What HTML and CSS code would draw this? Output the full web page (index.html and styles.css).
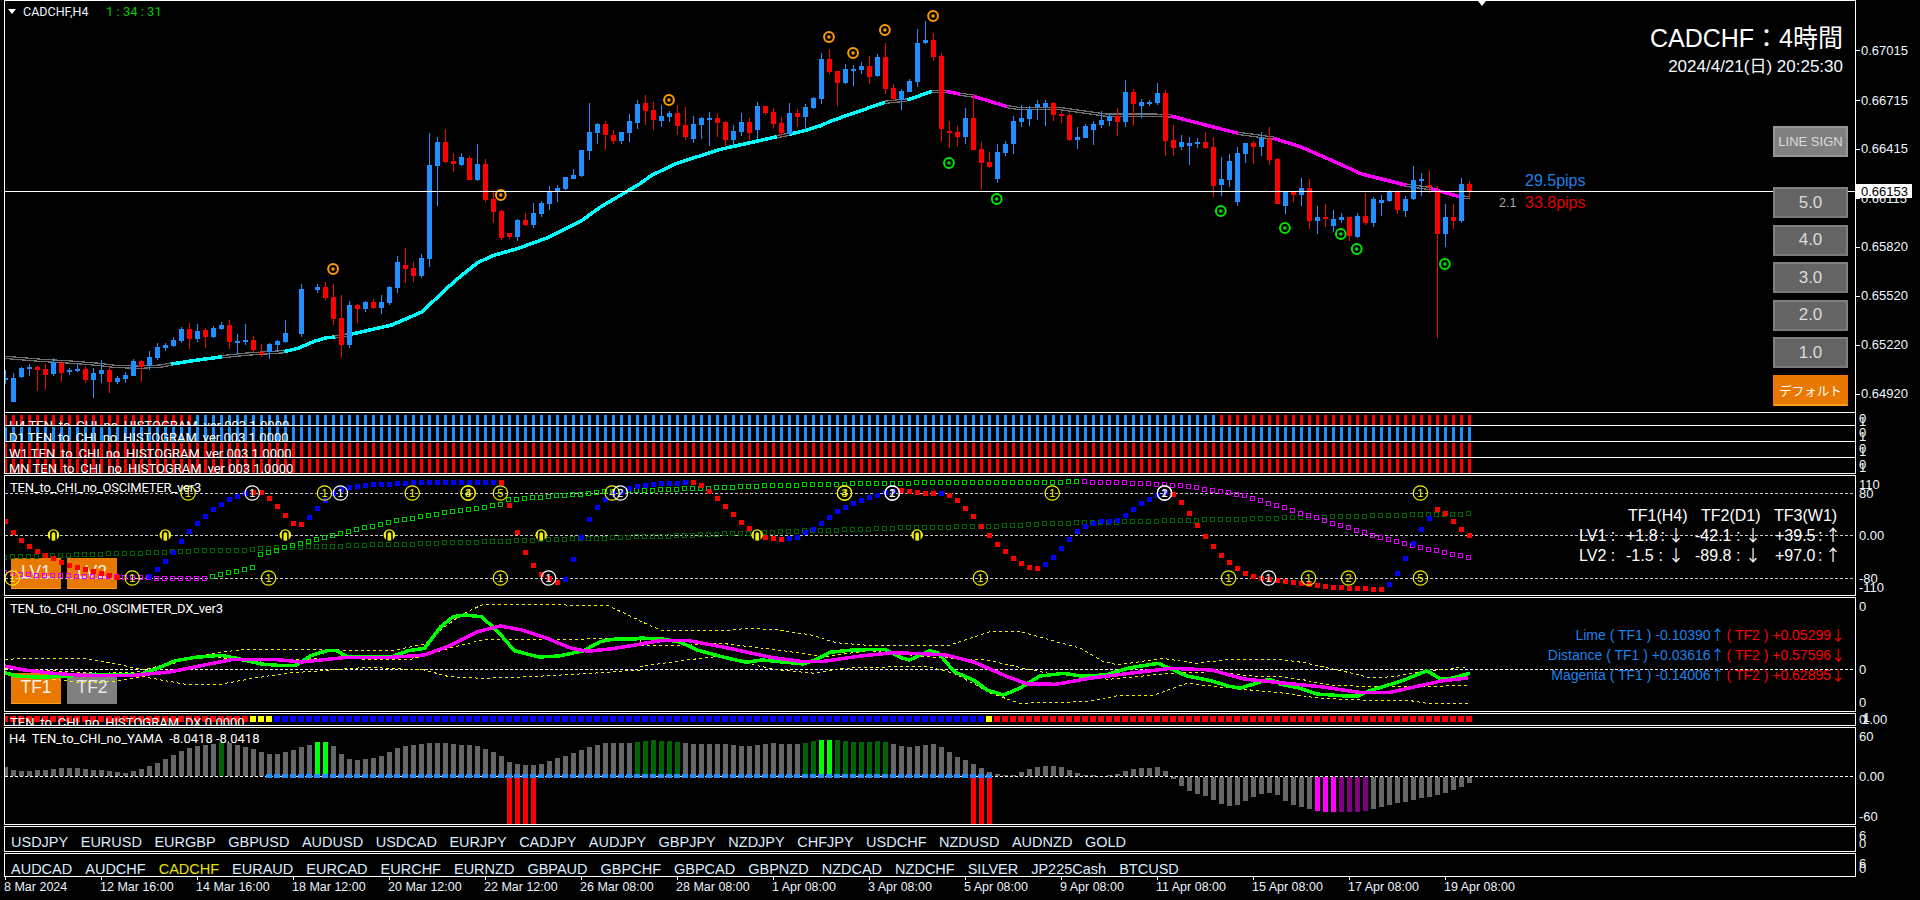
FILE: index.html
```html
<!DOCTYPE html>
<html lang="ja">
<head>
<meta charset="utf-8">
<title>CADCHF,H4</title>
<link rel="stylesheet" href="styles.css">
</head>
<body>
<main class="terminal">
  <section class="pane pane-main">
    <div class="plot">
      <svg class="chart" id="main"></svg>
      <div class="symbol-tag"><i class="tri"></i><span class="symbol-name">CADCHF,H4</span><span class="timer">1 : 34 : 31</span></div>
      <i class="top-mark"></i>
      <div class="headline">
        <div class="headline-title">CADCHF：4時間</div>
        <div class="headline-date">2024/4/21(日) 20:25:30</div>
      </div>
      <div class="pips">
        <span></span><span class="pip-up">29.5pips</span>
        <span class="pip-ratio">2.1</span><span class="pip-down">33.8pips</span>
      </div>
      <div class="side-buttons">
        <button class="btn btn-sign">LINE SIGN</button>
        <button class="btn">5.0</button>
        <button class="btn">4.0</button>
        <button class="btn">3.0</button>
        <button class="btn">2.0</button>
        <button class="btn">1.0</button>
        <button class="btn btn-default">デフォルト</button>
      </div>
    </div>
    <div class="axis"><svg class="chart" id="main-axis"></svg></div>
  </section>

  <section class="pane pane-strip pane-h4">
    <div class="plot"><svg class="chart" id="h4"></svg><div class="strip-label">H4 TEN_to_CHI_no_HISTOGRAM_ver 003 1.0000</div></div>
    <div class="axis"><svg class="chart" id="h4-axis"></svg></div>
  </section>
  <section class="pane pane-strip pane-d1">
    <div class="plot"><svg class="chart" id="d1"></svg><div class="strip-label">D1 TEN_to_CHI_no_HISTOGRAM_ver 003 1.0000</div></div>
    <div class="axis"><svg class="chart" id="d1-axis"></svg></div>
  </section>
  <section class="pane pane-strip pane-w1">
    <div class="plot"><svg class="chart" id="w1"></svg><div class="strip-label">W1 TEN_to_CHI_no_HISTOGRAM_ver 003 1.0000</div></div>
    <div class="axis"><svg class="chart" id="w1-axis"></svg></div>
  </section>
  <section class="pane pane-strip pane-mn">
    <div class="plot"><svg class="chart" id="mn"></svg><div class="strip-label">MN TEN_to_CHI_no_HISTOGRAM_ver 003 1.0000</div></div>
    <div class="axis"><svg class="chart" id="mn-axis"></svg></div>
  </section>

  <section class="pane pane-osc">
    <div class="plot">
      <div class="tf-buttons tf-lv"><button class="tf tf-on">LV1</button><button class="tf tf-on">LV2</button></div>
      <svg class="chart" id="osc"></svg>
      <div class="pane-title">TEN_to_CHI_no_OSCIMETER_ver3</div>
      <div class="lv-table">
        <span></span><span class="lv-head lv-h1">TF1(H4)</span><span class="lv-head lv-h2">TF2(D1)</span><span class="lv-head lv-h3">TF3(W1)</span>
        <span>LV1 :</span><span class="lv-cell lv-a"><b>+1.8</b><b>:</b><b class="arr">↓</b></span><span class="lv-cell"><b>-42.1</b><b>:</b><b class="arr">↓</b></span><span class="lv-cell"><b>+39.5</b><b>:</b><b class="arr">↑</b></span>
        <span>LV2 :</span><span class="lv-cell lv-a"><b>-1.5</b><b>:</b><b class="arr">↓</b></span><span class="lv-cell"><b>-89.8</b><b>:</b><b class="arr">↓</b></span><span class="lv-cell"><b>+97.0</b><b>:</b><b class="arr">↑</b></span>
      </div>
    </div>
    <div class="axis"><svg class="chart" id="osc-axis"></svg></div>
  </section>

  <section class="pane pane-dx">
    <div class="plot">
      <div class="tf-buttons tf-dx"><button class="tf tf-on">TF1</button><button class="tf tf-off">TF2</button></div>
      <svg class="chart" id="dx"></svg>
      <div class="pane-title pane-title-dx">TEN_to_CHI_no_OSCIMETER_DX_ver3</div>
      <div class="dx-table">
        <div class="dx-row"><span class="dx-blue">Lime ( TF1 ) -0.10390<i class="arr">↑</i></span><span class="dx-red">( TF2 ) +0.05299<i class="arr">↓</i></span></div>
        <div class="dx-row"><span class="dx-blue">Distance ( TF1 ) +0.03616<i class="arr">↑</i></span><span class="dx-red">( TF2 ) +0.57596<i class="arr">↓</i></span></div>
        <div class="dx-row"><span class="dx-blue">Magenta ( TF1 ) -0.14006<i class="arr">↑</i></span><span class="dx-red">( TF2 ) +0.62895<i class="arr">↓</i></span></div>
      </div>
    </div>
    <div class="axis"><svg class="chart" id="dx-axis"></svg></div>
  </section>

  <section class="pane pane-hdx">
    <div class="plot"><svg class="chart" id="hdx"></svg><div class="strip-label strip-label-dx">TEN_to_CHI_no_HISTOGRAM_DX 0.0000</div></div>
    <div class="axis"><svg class="chart" id="hdx-axis"></svg></div>
  </section>

  <section class="pane pane-yama">
    <div class="plot"><svg class="chart" id="yama"></svg><div class="pane-title pane-title-yama">H4&nbsp; TEN_to_CHI_no_YAMA&nbsp; -8.0418 -8.0418</div></div>
    <div class="axis"><svg class="chart" id="yama-axis"></svg></div>
  </section>

  <section class="pane pane-sym1">
    <div class="plot symbols">
      <span>USDJPY</span><span>EURUSD</span><span>EURGBP</span><span>GBPUSD</span><span>AUDUSD</span><span>USDCAD</span><span>EURJPY</span><span>CADJPY</span><span>AUDJPY</span><span>GBPJPY</span><span>NZDJPY</span><span>CHFJPY</span><span>USDCHF</span><span>NZDUSD</span><span>AUDNZD</span><span>GOLD</span>
    </div>
    <div class="axis"><svg class="chart" id="sym1-axis"></svg></div>
  </section>
  <section class="pane pane-sym2">
    <div class="plot symbols">
      <span>AUDCAD</span><span>AUDCHF</span><span class="sym-active">CADCHF</span><span>EURAUD</span><span>EURCAD</span><span>EURCHF</span><span>EURNZD</span><span>GBPAUD</span><span>GBPCHF</span><span>GBPCAD</span><span>GBPNZD</span><span>NZDCAD</span><span>NZDCHF</span><span>SILVER</span><span>JP225Cash</span><span>BTCUSD</span>
    </div>
    <div class="axis"><svg class="chart" id="sym2-axis"></svg></div>
  </section>

  <footer class="time-axis">
    <span>8 Mar 2024</span><span>12 Mar 16:00</span><span>14 Mar 16:00</span><span>18 Mar 12:00</span><span>20 Mar 12:00</span><span>22 Mar 12:00</span><span>26 Mar 08:00</span><span>28 Mar 08:00</span><span>1 Apr 08:00</span><span>3 Apr 08:00</span><span>5 Apr 08:00</span><span>9 Apr 08:00</span><span>11 Apr 08:00</span><span>15 Apr 08:00</span><span>17 Apr 08:00</span><span>19 Apr 08:00</span>
  </footer>
</main>
<script src="app.js"></script>
</body>
</html>
```

FILE: styles.css
```css
* { box-sizing: border-box; }
html, body { margin: 0; background: #000; }
body { width: 1920px; height: 900px; overflow: hidden; font-family: "Liberation Sans", "Noto Sans CJK JP", sans-serif; color: #fff; }
.terminal { display: flex; flex-direction: column; width: 1920px; height: 900px; }

.pane { display: flex; flex: none; }
.plot { position: relative; flex: none; width: 1852px; margin-left: 4px; overflow: hidden; background: #000; border-left: 1px solid #fff; border-right: 1px solid #fff; border-bottom: 1px solid #fff; }
.axis { position: relative; flex: 1; }
.chart { position: relative; z-index: 1; display: block; width: 100%; height: 100%; overflow: hidden; shape-rendering: crispEdges; }
.axis .chart { overflow: visible; }

.pane-main { height: 413px; }
.pane-main .plot { border-top: 1px solid #fff; }
.pane-h4 { height: 13px; }
.pane-d1, .pane-w1, .pane-mn { height: 16px; }
.pane-osc, .pane-dx, .pane-hdx, .pane-yama, .pane-sym1, .pane-sym2 { margin-top: 1px; }
.pane-osc .plot, .pane-dx .plot, .pane-hdx .plot, .pane-yama .plot, .pane-sym1 .plot, .pane-sym2 .plot { border-top: 1px solid #fff; }
.pane-osc { height: 121px; }
.pane-dx { height: 115px; }
.pane-hdx { height: 13px; }
.pane-yama { height: 98px; }
.pane-sym1 { height: 26px; }
.pane-sym2 { height: 24px; }

/* SVG text */
.axis-text { font-size: 13px; fill: #eef6ff; shape-rendering: auto; }
.axis-tag { font-size: 13px; fill: #000; }
.ring-text { font-size: 11px; text-anchor: middle; }

/* main pane overlays */
.symbol-tag { position: absolute; z-index: 2; left: 3px; top: 3px; display: flex; align-items: center; height: 15px; font-family: "Roboto", "Liberation Sans", sans-serif; font-size: 12.5px; }
.tri { width: 0; height: 0; border-left: 4px solid transparent; border-right: 4px solid transparent; border-top: 5px solid #fff; }
.symbol-name { margin-left: 7px; width: 83px; color: #f0f6ff; }
.timer { color: #00c800; font-size: 13px; }
.top-mark { position: absolute; z-index: 2; left: 1473px; top: 0; width: 0; height: 0; border-left: 4px solid transparent; border-right: 4px solid transparent; border-top: 5px solid #fff; }
.headline { position: absolute; z-index: 2; right: 12px; top: 22px; display: flex; flex-direction: column; align-items: flex-end; }
.headline-title { font-size: 25px; line-height: 30px; color: #fff; }
.headline-date { font-size: 17px; line-height: 20px; margin-top: 4px; color: #f4f8ff; }
.pips { position: absolute; z-index: 2; left: 1494px; top: 169px; display: grid; grid-template-columns: 26px auto; grid-auto-rows: 22px; align-items: center; font-size: 16px; }
.pip-up { color: #1e82e8; }
.pip-down { color: #e00000; }
.pip-ratio { color: #aaa; font-size: 12.5px; }
.side-buttons { position: absolute; z-index: 2; right: 7px; top: 125px; display: flex; flex-direction: column; gap: 6.5px; }
.btn { width: 75px; height: 31px; padding: 0; font: 17px "Liberation Sans", sans-serif; color: #dcdcdc; background: #646464; border: 2px solid #808080; border-bottom-color: #7a7a7a; }
.btn-sign { margin-bottom: 23.5px; font-size: 13px; background: #808080; border-color: #969696; }
.btn-default { font: 12.5px "Noto Sans CJK JP", sans-serif; color: #fff; background: #e87800; border-color: #e87800; border-bottom-color: #ffa020; }

/* indicator labels */
.strip-label { position: absolute; z-index: 2; left: 4px; white-space: nowrap; line-height: 15px; font: 13px/15px "Roboto", "Liberation Sans", sans-serif; color: #fff; }
.pane-h4 .strip-label { top: 5px; }
.pane-d1 .strip-label { top: 4px; }
.pane-w1 .strip-label { top: 4px; }
.pane-mn .strip-label { top: 3px; }
.strip-label-dx { top: 1px; left: 5px; }
.pane-title { position: absolute; z-index: 2; left: 5px; top: 4px; white-space: nowrap; font: 13px/15px "Roboto", "Liberation Sans", sans-serif; letter-spacing: -0.2px; color: #fff; }
.pane-title-dx { top: 3px; }
.pane-title-yama { left: 4px; top: 3px; letter-spacing: 0; }

.tf-buttons { position: absolute; z-index: 0; left: 6px; display: flex; gap: 6px; }
.tf-lv { top: 82px; }
.tf-dx { top: 75px; }
.tf { width: 50px; height: 31px; padding: 0 0 2px; font: 17.5px "Liberation Sans", sans-serif; color: #f8f0e8; border: 0; }
.tf-on { background: #e87800; border-bottom: 1px solid #ffa020; }
.tf-off { background: #808080; color: #e8e8e8; }

.arr { font-family: "Noto Sans CJK JP", sans-serif; font-style: normal; font-weight: normal; line-height: 1; }
.lv-table { position: absolute; z-index: 2; left: 1574px; top: 30px; display: grid; grid-template-columns: 47px 69px 80px 66px; grid-auto-rows: 20px; align-items: center; font-size: 16px; line-height: 20px; white-space: nowrap; color: #fff; }
.lv-cell { display: flex; justify-content: space-between; align-items: baseline; width: 66px; height: 20px; }
.lv-a { width: 58px; }
.lv-cell b { font-weight: normal; }
.lv-h1 { margin-left: 2px; }
.lv-h2 { margin-left: 6px; }
.lv-h3 { margin-left: -1px; }
.dx-table { position: absolute; z-index: 2; right: 15px; top: 27px; display: flex; flex-direction: column; align-items: flex-end; font-size: 14px; line-height: 20px; white-space: nowrap; }
.dx-row { display: flex; gap: 7px; height: 20px; }
.dx-table .arr { display: inline-block; width: 9px; text-align: center; }
.dx-blue { color: #1e82e8; }
.dx-red { color: #f00; }

.symbols { display: flex; align-items: flex-start; padding: 7px 0 0 6px; font-size: 14.5px; line-height: 17px; color: #dcecff; white-space: nowrap; }
.pane-sym1 .symbols { gap: 12.5px; }
.pane-sym2 .symbols { gap: 13px; }
.sym-active { color: #e6e600; }

.time-axis { flex: 1; display: flex; padding-left: 4px; font-size: 12.5px; color: #e8f2ff; }
.time-axis span { position: relative; flex: none; width: 96px; padding-top: 3px; line-height: 15px; white-space: nowrap; }
.time-axis span::before { content: ""; position: absolute; left: 1px; top: 0; width: 1px; height: 3px; background: #fff; }
```

FILE: app.js
```js
var bar = function (i) { return 5 + 8 * i; };
var BLUE = '#1e90ff', RED = '#ff0000';

function fit(id) {
  var el = document.getElementById(id), r = el.getBoundingClientRect();
  el.setAttribute('viewBox', r.left + ' ' + r.top + ' ' + r.width + ' ' + r.height);
  return el;
}
function rect(x, y, w, h, fill) {
  return '<rect x="' + x + '" y="' + y + '" width="' + w + '" height="' + h + '" fill="' + fill + '"/>';
}
function poly(pts, color, width, dash) {
  return '<polyline fill="none" stroke="' + color + '" stroke-width="' + width + '" stroke-linejoin="round"' +
    (dash ? ' stroke-dasharray="' + dash + '"' : '') + ' points="' +
    pts.map(function (p) { return p[0].toFixed(1) + ',' + p[1].toFixed(1); }).join(' ') + '"/>';
}
/* anchors are read from the reference: [x0, y0, [x, y, x, y ...]] */
function anchors(list) {
  var out = [];
  list.forEach(function (s) {
    for (var k = 0; k < s[2].length; k += 2) out.push([s[0] + s[2][k] / 2.45, s[1] + s[2][k + 1] / 3]);
  });
  return out;
}
function at(pts, x) {
  if (x <= pts[0][0]) return pts[0][1];
  for (var k = 1; k < pts.length; k++) {
    if (x <= pts[k][0]) {
      var a = pts[k - 1], b = pts[k];
      return a[1] + (b[1] - a[1]) * (x - a[0]) / (b[0] - a[0]);
    }
  }
  return pts[pts.length - 1][1];
}
function axis(id, labels, ticks) {
  var s = '';
  (ticks || []).forEach(function (y) { s += rect(1856, y, 4, 1, '#fff'); });
  labels.forEach(function (l) {
    s += '<text class="axis-text" x="' + (l[2] || 1859) + '" y="' + (l[1] + 4.5) + '">' + l[0] + '</text>';
  });
  return s;
}

/* ---------- candles: colour, high, low, body top, body bottom (y x 3) ---------- */
var candles = [
'b 1110 1152 1133 1140','b 1120 1205 1135 1205','b 1100 1135 1104 1132','b 1093 1128 1101 1106','r 1097 1172 1101 1110','r 1092 1170 1107 1125','b 1075 1128 1086 1122','r 1082 1146 1089 1119','b 1103 1125 1110 1116','b 1090 1115 1107 1113',
'r 1098 1148 1107 1140','b 1105 1194 1119 1140','b 1080 1150 1110 1122','r 1100 1178 1110 1146','b 1128 1152 1134 1146','b 1115 1148 1125 1137','b 1077 1128 1083 1128','r 1080 1146 1083 1100','b 1052 1110 1071 1097','b 1030 1080 1041 1074',
'b 1028 1052 1035 1044','b 1012 1042 1020 1038','b 980 1028 987 1023','r 968 1047 987 1017','b 972 1025 993 1017','r 985 1044 990 1011','b 978 1014 984 1011','b 966 990 975 987','r 960 1046 975 1025','b 1002 1062 1023 1026',
'b 972 1035 1020 1026','r 1008 1055 1020 1050','r 1032 1072 1056 1059','b 1030 1076 1033 1056','b 1020 1056 1023 1035','b 960 1028 999 1026','','b 852 1010 867 1002','','b 852 878 861 870',
'r 846 900 861 894','r 852 975 891 957','r 885 1073 954 1035','b 903 1044 915 1035','r 912 969 915 927','b 903 936 906 927','r 897 927 906 924','b 885 942 906 924','b 858 915 861 909','b 768 879 786 864',
'r 744 849 795 807','r 786 846 804 828','b 762 834 774 828','b 399 801 495 777','b 411 618 426 498','r 387 489 426 486','r 459 516 483 492','b 459 498 471 495','r 468 540 474 540','b 432 543 492 540',
'r 477 606 492 600','r 570 669 597 636','r 630 720 633 714','r 699 717 699 711','b 657 723 660 711','r 639 678 660 675','b 609 684 639 675','b 603 651 609 642','b 558 630 573 612','b 555 606 564 576',
'b 531 570 531 567','b 507 537 525 537','b 450 531 450 528','b 309 480 396 453','b 369 432 372 399','r 363 450 372 405','r 390 432 405 423','b 396 432 396 423','b 342 426 363 399','b 300 387 312 369',
'r 285 375 309 333','r 306 390 330 360','b 315 381 348 363','b 333 366 339 351','r 315 405 339 378','r 321 420 375 411','b 348 429 372 417','b 351 417 354 375','b 336 438 354 357','r 339 411 354 369',
'r 363 441 366 420','b 375 438 393 420','b 339 408 366 396','r 354 420 366 399','b 306 417 318 390','r 318 345 318 339','r 324 384 336 372','r 351 411 369 399','b 309 405 339 402','r 327 381 339 351',
'b 312 390 321 351','b 291 327 294 324','b 159 312 177 297','r 147 222 177 216','r 213 318 213 249','b 192 252 207 249','b 195 258 207 213','b 186 222 198 210','r 168 252 198 231','b 162 231 171 228',
'r 129 282 171 267','r 252 303 264 297','b 267 330 273 300','b 237 276 243 276','b 87 261 129 246','b 63 132 120 129','r 99 183 120 171','r 159 426 168 387','r 363 444 393 399','r 378 438 396 411',
'b 324 432 354 411','r 285 450 354 450','r 426 570 447 489','r 456 504 486 501','b 432 549 456 537','b 423 468 432 459','b 348 462 363 432','b 315 381 354 366','b 318 378 327 357','b 300 360 312 321',
'b 300 378 309 321','r 306 363 309 345','r 333 369 342 348','r 339 423 345 420','b 381 447 411 420','b 372 414 378 414','b 363 435 372 390','b 333 384 360 375','b 342 378 348 363','r 324 408 348 366',
'b 240 381 276 366','r 267 378 276 312','b 297 354 306 318','b 300 318 306 312','b 249 315 279 309','r 270 468 279 423','r 375 468 420 444','b 405 450 426 441','b 411 495 429 438','b 414 444 426 432',
'r 396 447 426 444','r 411 591 441 558','b 471 588 537 555','b 462 561 483 540','b 441 618 459 606','b 429 489 429 462','r 423 492 429 441','b 396 468 414 441','r 381 495 417 480','r 474 612 477 612',
'b 573 642 576 618','r 573 606 576 585','b 534 618 564 585','r 537 687 564 663','b 618 702 651 663','r 612 681 651 654','b 630 696 657 678','b 639 669 651 660','r 651 723 651 708','b 639 714 648 711',
'r 579 675 648 669','b 591 681 597 669','b 585 648 600 609','b 570 606 573 603','r 573 642 573 630','b 588 651 597 633','b 498 600 540 597','b 519 588 537 543','r 510 579 555 561','r 558 1014 576 702',
'b 612 741 651 702','r 612 687 651 663','b 534 669 552 663','r 543 594 552 576'
];

/* ---------- main pane ---------- */
(function () {
  var s = '';
  var ma = function (list, kind) {
    var pts = anchors(list);
    if (kind === 'gray') return poly(pts, '#707070', 3.5) + poly(pts, '#000', 1);
    return poly(pts, kind, 3.5);
  };
  s += ma([[0, 0, [10, 1072, 60, 1077, 100, 1081, 180, 1087, 240, 1093, 280, 1099, 340, 1102, 395, 1098, 420, 1092]]], 'gray');
  s += ma([[0, 0, [420, 1092, 480, 1081, 545, 1070]]], '#00ffff');
  s += ma([[0, 0, [545, 1070, 600, 1063, 695, 1055]]], 'gray');
  s += ma([[0, 0, [695, 1055, 730, 1045, 770, 1024, 800, 1013, 820, 1011]]], '#00ffff');
  s += ma([[0, 0, [820, 1011, 855, 1004]]], 'gray');
  s += ma([[0, 0, [855, 1004, 960, 975, 1035, 935, 1090, 870, 1130, 827, 1170, 788, 1210, 766, 1270, 745, 1340, 714, 1425, 662, 1470, 622, 1568, 551]],
           [640, 0, [0, 551, 30, 525, 90, 490, 200, 447, 270, 428, 335, 410]]], '#00ffff');
  s += ma([[640, 0, [335, 410, 365, 403]]], 'gray');
  s += ma([[640, 0, [365, 403, 400, 393, 440, 378, 470, 362, 600, 307]]], '#00ffff');
  s += ma([[640, 0, [600, 307, 655, 300]]], 'gray');
  s += ma([[640, 0, [655, 300, 715, 274]]], '#00ffff');
  s += ma([[640, 0, [715, 274, 750, 274]]], 'gray');
  s += ma([[640, 0, [750, 274, 785, 283]]], '#ff00ff');
  s += ma([[640, 0, [785, 283, 815, 288]]], 'gray');
  s += ma([[640, 0, [815, 288, 900, 320]]], '#ff00ff');
  s += ma([[640, 0, [900, 320, 925, 325, 1025, 325, 1100, 338, 1140, 345, 1255, 345, 1300, 348]]], 'gray');
  s += ma([[640, 0, [1300, 348, 1465, 400]]], '#ff00ff');
  s += ma([[640, 0, [1465, 400, 1550, 414]]], 'gray');
  s += ma([[640, 0, [1550, 414, 1568, 421]], [1280, 0, [0, 421, 50, 440, 130, 483, 200, 522, 310, 556]]], '#ff00ff');
  s += ma([[1280, 0, [310, 556, 370, 566]]], 'gray');
  s += ma([[1280, 0, [370, 566, 440, 590]]], '#ff00ff');
  s += ma([[1280, 0, [440, 590, 465, 593]]], 'gray');

  candles.forEach(function (d, i) {
    if (!d) return;
    var p = d.split(' '), col = p[0] === 'b' ? BLUE : RED;
    var hi = Math.round(p[1] / 3), lo = Math.round(p[2] / 3), top = Math.round(p[3] / 3), bot = Math.round(p[4] / 3);
    s += rect(bar(i), hi, 1, lo - hi, col);
    s += rect(bar(i) - 2, top, 5, Math.max(bot - top, 2), col);
  });

  var mark = function (list, col) {
    list.forEach(function (m) {
      var x = m[0] + m[1] / 2.45, y = m[2] / 3;
      s += '<g shape-rendering="auto"><circle cx="' + x + '" cy="' + y + '" r="4.9" fill="#000" stroke="' + col + '" stroke-width="2"/>' +
        '<circle cx="' + x + '" cy="' + y + '" r="1.7" fill="' + col + '"/></g>';
    });
  };
  mark([[0, 816, 807], [0, 1227, 585], [640, 71, 300], [640, 463, 111], [640, 522, 159], [640, 600, 90], [640, 718, 48]], '#ff9a00');
  mark([[640, 757, 489], [640, 874, 597], [640, 1423, 633], [1280, 12, 684], [1280, 149, 702], [1280, 188, 747], [1280, 404, 792]], '#00e600');
  s += rect(5, 191, 1850, 1, '#fff');
  fit('main').innerHTML = s;

  var ax = [['0.67015', 50], ['0.66715', 100], ['0.66415', 148.5], ['0.66115', 198], ['0.65820', 246.5], ['0.65520', 295.5], ['0.65220', 344.5], ['0.64920', 393.5]];
  var a = axis('main-axis', ax.map(function (l) { return [l[0], l[1], 1861]; }), ax.map(function (l) { return Math.round(l[1]); }));
  a += rect(1856, 184, 56, 14, '#fff');
  a += '<text class="axis-tag" x="1861" y="195.5">0.66153</text>';
  fit('main-axis').innerHTML = a;
})();

/* ---------- histogram strips ---------- */
function strip(id, top, bottom, colorOf) {
  var s = '';
  for (var i = 0; i < 184; i++) s += rect(bar(i) - 1, top, 3, bottom - top, colorOf(i));
  fit(id).innerHTML = s;
}
strip('h4', 415, 425, function (i) { return i < 24 || i >= 152 ? RED : BLUE; });
strip('d1', 427, 441, function () { return BLUE; });
strip('w1', 443, 457, function () { return RED; });
strip('mn', 459, 473, function () { return RED; });
fit('h4-axis').innerHTML = axis('h4-axis', [['0', 418], ['1', 421]]);
fit('d1-axis').innerHTML = axis('d1-axis', [['0', 432], ['1', 436]]);
fit('w1-axis').innerHTML = axis('w1-axis', [['0', 448], ['1', 451]]);
fit('mn-axis').innerHTML = axis('mn-axis', [['0', 464], ['1', 467]]);

/* ---------- oscimeter ---------- */
(function () {
  var solid = [
    [0,'r',334],[1,'r',367],[2,'r',391],[3,'r',409],[4,'r',424],[5,'r',436],[6,'r',445],[7,'r',457],[8,'r',466],[9,'r',472],[10,'r',478],[11,'r',484],[12,'r',490],[13,'r',496],[14,'r',502],
    [18,'b',498],[19,'b',478],[20,'b',454],[21,'b',426],[22,'b',394],[23,'b',364],[24,'b',340],[25,'b',319],[26,'b',298],[27,'b',283],[28,'b',268],[29,'b',259],[30,'b',250],[31,'r',245],[32,'r',247],[33,'r',265],[34,'r',289],[35,'r',316],[36,'r',340],[37,'r',343],
    [38,'b',322],[39,'b',295],[40,'b',271],[41,'b',250],[42,'b',238],[43,'b',232],[44,'b',229],[45,'b',226],[46,'b',223],[47,'b',223],[48,'b',223],[49,'b',220],[50,'b',220],[51,'b',217],[52,'b',217],[53,'b',217],[54,'b',217],[55,'b',217],[56,'b',217],[57,'b',217],[58,'b',217],[59,'b',217],[60,'b',217],[61,'b',217],
    [62,'r',217],[63,'r',284],[64,'r',367],[65,'r',427],[66,'r',466],[67,'r',493],[68,'r',505],[69,'r',517],[70,'b',508],[71,'b',448],[72,'b',382],[73,'b',328],[74,'b',292],[75,'b',268],[76,'b',250],[77,'b',247],[78,'b',235],[79,'b',229],
    [80,'b',226],[81,'b',223],[82,'b',220],[83,'b',220],[84,'b',220],[85,'b',217],[86,'r',217],[87,'r',226],[88,'r',244],[89,'r',265],[90,'r',289],[91,'r',313],[92,'r',337],[93,'r',355],[94,'r',370],[95,'r',382],[96,'r',385],[97,'r',388],
    [98,'b',385],[99,'b',382],[100,'b',367],[101,'b',358],[102,'b',340],[103,'b',322],[104,'b',304],[105,'b',292],[106,'b',280],[107,'b',271],[108,'b',262],[109,'b',256],[110,'b',247],[111,'b',244],
    [112,'r',241],[113,'r',244],[114,'r',247],[115,'r',250],[116,'r',250],[117,'b',250],[118,'r',256],[119,'r',271],[120,'r',295],[121,'r',319],[122,'r',349],[123,'r',376],[124,'r',403],[125,'r',424],[126,'r',445],[127,'r',460],[128,'r',472],[129,'r',475],
    [130,'b',463],[131,'b',442],[132,'b',415],[133,'b',388],[134,'b',364],[135,'b',349],[136,'b',340],[137,'b',334],[138,'b',334],[139,'b',331],[140,'b',316],[141,'b',298],[142,'b',280],[143,'b',268],[144,'b',256],[145,'b',247],
    [146,'r',253],[147,'r',277],[148,'r',310],[149,'r',346],[150,'r',379],[151,'r',409],[152,'r',436],[153,'r',457],[154,'r',475],[155,'r',490],[156,'r',499],[157,'r',505],[158,'r',508],[159,'r',511],
    [160,'r',514],[161,'r',517],[162,'r',520],[163,'r',523],[164,'r',526],[165,'r',529],[166,'r',532],[167,'r',532],[168,'r',535],[169,'r',535],[170,'r',535],[171,'r',538],[172,'r',538],
    [173,'b',523],[174,'b',490],[175,'b',445],[176,'b',400],[177,'b',358],[178,'b',325],[179,'r',298],[180,'r',310],[181,'r',334],[182,'r',358],[183,'r',376]
  ];
  var upper = anchors([[0, 410, [14,490,40,494,120,498,160,499,200,500,240,500,280,502,320,505,360,505,400,506,440,508,500,508,520,502,540,496,560,490,580,487,600,481,620,475,640,435,660,430,680,421,697,415,717,408,737,403,756,397,776,391,796,385,816,379,836,373,855,367,875,361,894,355,914,352,934,346,953,340,973,334,993,331,1012,327,1032,322,1051,319,1071,316,1090,310,1110,307,1130,304,1149,301,1169,298,1188,295,1208,289,1228,286,1247,271,1267,271,1287,268,1306,265,1326,265,1345,262,1365,259,1385,259,1404,256,1424,256,1443,253,1463,250,1482,247,1502,247,1521,247,1541,244,1561,244]],
    [640, 410, [12,244,50,241,100,238,150,238,190,235,250,232,300,229,360,229,400,226,480,226,520,223,700,220,1030,220,1050,217,1070,217,1090,217,1130,220,1190,220,1247,223,1285,226,1325,229,1365,235,1404,244,1443,250,1482,259,1522,274,1561,289]],
    [1280, 410, [12,295,31,304,50,310,70,319,90,325,110,334,129,343,149,349,168,355,188,364,208,370,228,379,247,385,267,391,287,397,306,403,326,409,345,415,365,421,384,424,404,430,423,436,443,439,462,445]]]);
  var lower = anchors([[0, 410, [14,444,30,442,50,442,70,441,110,439,130,439,150,438,170,438,190,436,210,436,240,435,270,433,290,433,310,431,340,431,370,430,400,428,420,427,460,427,480,424,520,424,560,422,600,422,640,418,680,415,720,413,760,412,820,412,860,409,920,406,1000,405,1040,403,1100,400,1160,398,1240,395,1320,391,1400,388,1500,385,1568,382]],
    [640, 410, [12,382,100,379,200,373,300,370,400,364,500,361,650,355,800,352,900,349,1000,343,1080,340,1200,337,1280,334,1400,331,1500,328,1568,328]],
    [1280, 410, [12,325,100,325,120,322,210,322,230,319,340,316,470,313]]]);
  var s = '';
  [493, 535, 578].forEach(function (y) {
    s += '<line x1="5" x2="1855" y1="' + (y + .5) + '" y2="' + (y + .5) + '" stroke="#c8c8c8" stroke-width="1" stroke-dasharray="3 2"/>';
  });
  var hollow = function (i, y, col) {
    return '<rect x="' + (bar(i) - 2.5) + '" y="' + (Math.round(y) - 2.5) + '" width="4" height="4" fill="none" stroke="' + col + '"/>';
  };
  for (var i = 0; i < 184; i++) {
    s += hollow(i, at(lower, bar(i)), '#006400');
    var up = at(upper, bar(i));
    s += hollow(i, up, (i <= 25 || i >= 135) ? '#e000ff' : '#00d000');
  }
  solid.forEach(function (d) {
    var y = 410 + d[2] / 3;
    s += rect(bar(d[0]) - 2.5, Math.round(y) - 2, 5, 5, d[1] === 'b' ? '#0000ff' : RED);
  });
  var ring = function (x0, dx, y, col, n) {
    var x = x0 + dx / 2.45;
    return '<g shape-rendering="auto"><circle cx="' + x + '" cy="' + y + '" r="7.2" fill="none" stroke="' + col + '" stroke-width="1.2"/>' +
      '<text class="ring-text" x="' + x + '" y="' + (y + 4) + '" fill="' + col + '">' + n + '</text></g>';
  };
  var Y = '#f0f000', W = '#ffffff';
  [[0,461,493,Y,1],[0,618,493,W,1],[0,795,493,Y,1],[0,834,493,W,1],[0,1010,493,Y,1],[0,1147,493,Y,3],[0,1147,493,Y,4],[0,1226,493,Y,5],[0,1500,493,Y,4],[0,1520,493,W,2],
   [640,501,493,Y,4],[640,501,493,Y,3],[640,618,493,W,2],[640,618,493,W,1],[640,1010,493,Y,1],[640,1285,493,W,2],[640,1285,493,W,1],[1280,344,493,Y,1],
   [0,30,578,Y,1],[0,324,578,Y,1],[0,658,578,Y,1],[0,1226,578,Y,1],[0,1344,578,W,1],[640,834,578,Y,1],[640,1442,578,Y,1],[640,1540,578,W,1],[1280,70,578,Y,1],[1280,168,578,Y,2],[1280,344,578,Y,5]
  ].forEach(function (r) { s += ring(r[0], r[1], r[2], r[3], r[4]); });
  [[0,131],[0,405],[0,699],[0,954],[0,1326],[640,287],[640,679]].forEach(function (m) {
    var x = m[0] + m[1] / 2.45;
    s += '<g shape-rendering="auto" transform="translate(' + x + ' 535)"><circle r="5.8" fill="#f0f000"/><path d="M-2.6 5V-1a2.6 2.6 0 0 1 5.2 0V5" fill="none" stroke="#000" stroke-width="1.6"/></g>';
  });
  fit('osc').innerHTML = s;
  fit('osc-axis').innerHTML = axis('osc-axis', [['110', 484.5], ['80', 493], ['0.00', 535], ['-80', 578], ['-110', 587.5]]);
})();

/* ---------- oscimeter DX ---------- */
(function () {
  var lime = anchors([[0, 410, [12,788,40,798,100,802,180,797,250,795,340,795,380,778,430,752,480,742,540,736,580,745,640,762,680,766,725,766,760,738,800,722,825,722,850,740,960,740,1000,722,1040,715,1080,650,1110,620,1140,615,1180,620,1220,665,1260,722,1320,741,1370,738,1430,722,1470,695,1500,688,1568,686]],
    [640, 410, [0,684,60,688,100,697,140,720,200,740,260,757,300,750,400,762,430,750,465,727,520,720,600,718,640,743,660,750,710,722,730,728,770,785,820,812,850,840,890,855,930,835,980,798,1040,790,1080,798,1140,795,1200,773,1270,760,1340,798,1400,812,1440,828,1470,835,1540,808,1568,818]],
    [1280, 410, [0,822,50,835,90,852,160,858,190,858,220,842,300,812,360,782,390,805,420,805,465,790]]]);
  var magenta = anchors([[0, 410, [12,768,60,780,130,790,200,796,330,796,420,785,500,765,570,748,670,748,740,756,850,742,960,742,1040,735,1100,708,1170,665,1225,648,1280,660,1340,685,1400,715,1440,724,1500,716,1568,703]],
    [640, 410, [0,702,50,692,120,692,200,710,320,742,400,755,450,754,540,738,620,728,690,731,750,735,820,757,900,800,950,822,1020,823,1100,805,1200,790,1300,775,1400,780,1480,807,1568,818]],
    [1280, 410, [0,818,100,830,200,848,270,847,350,825,400,812,460,804]]]);
  var up = anchors([[0, 410, [12,748,100,744,200,744,280,760,350,780,430,755,520,730,600,718,700,718,960,722,1040,702,1090,650,1130,615,1180,585,1340,584,1490,587,1568,632]],
    [640, 410, [0,633,50,660,210,663,260,655,340,660,420,675,480,698,570,707,760,705,860,664,930,664,1020,695,1080,715,1130,752,1170,765,1280,745,1360,760,1450,748,1568,748]],
    [1280, 410, [0,748,60,758,110,772,150,782,220,803,280,800,320,790,460,770]]]);
  var mid = anchors([[0, 410, [12,775,250,790,350,785,500,735,600,755,800,745,1000,750,1100,715,1180,690,1300,688,1568,686]],
    [640, 410, [0,705,80,708,200,700,350,722,450,740,560,722,700,740,850,750,940,775,1000,790,1150,808,1300,790,1400,785,1500,798,1568,800]],
    [1280, 410, [0,800,60,810,120,825,220,830,360,830,460,825]]]);
  var low = anchors([[0, 410, [12,790,200,818,280,815,350,800,450,822,540,823,620,805,700,790,900,772,1040,780,1100,800,1180,805,1300,800,1450,790,1568,780]],
    [640, 410, [0,770,100,752,200,738,260,760,340,780,430,790,500,775,560,772,700,769,770,790,860,850,930,880,1090,875,1180,855,1260,855,1340,820,1450,835,1568,848]],
    [1280, 410, [10,850,100,865,200,870,320,872,360,880,460,880]]]);
  var s = '<line x1="5" x2="1855" y1="669.5" y2="669.5" stroke="#fff" stroke-dasharray="3 2"/>';
  [up, mid, low].forEach(function (l) { s += poly(l, '#f0f000', 1, '3 3'); });
  s += poly(lime, '#00ff00', 3.5) + poly(magenta, '#ff00ff', 3.5);
  fit('dx').innerHTML = s;
  fit('dx-axis').innerHTML = axis('dx-axis', [['0', 606.5], ['0', 669], ['0', 702.5]]);
})();

/* ---------- histogram DX ---------- */
(function () {
  var s = '';
  for (var i = 0; i < 184; i++) {
    var col = i <= 30 ? RED : i <= 33 ? '#ffff00' : i <= 122 ? '#0000ff' : i === 123 ? '#ffff00' : RED;
    s += rect(bar(i) - 3, 716, 6, 6, col);
  }
  fit('hdx').innerHTML = s;
  fit('hdx-axis').innerHTML = axis('hdx-axis', [['0', 719], ['1', 717, 1863], ['1.00', 719, 1862]]);
})();

/* ---------- yama ---------- */
(function () {
  var tops = [201,210,213,213,210,210,207,204,204,204,207,210,210,213,216,219,213,207,198,189,177,165,153,144,138,135,132,125,129,135,141,147,156,162,162,156,150,141,135,126,126,138,162,177,180,177,174,168,156,144,138,135,132,129,129,129,132,135,135,138,147,156,168,186,192,195,195,192,183,174,168,159,150,141,135,129,129,129,129,126,
    123,120,123,123,126,129,132,132,132,132,132,135,138,138,135,132,129,132,132,132,129,123,120,120,120,123,126,126,126,123,126,132,138,141,138,135,132,141,156,171,180,192,204,216,222,225,225,216,207,201,198,198,201,210,219,225,225,229,225,222,213,207,204,204,201,213,236,258,273,282,288,300,312,318,315,303,291,282,279,285,
    303,315,321,327,333,336,336,336,336,336,333,327,321,315,309,306,300,294,291,285,279,270,261,249];
  var dark = [27,79,80,81,82,83,84,100,101,104,105,106,107,108,109,110];
  var lime = [39,40,102,103];
  var s = '<line x1="5" x2="1855" y1="776.5" y2="776.5" stroke="#fff" stroke-dasharray="3 2"/>';
  tops.forEach(function (v, i) {
    var y = Math.round(700 + v / 3);
    var col = dark.indexOf(i) >= 0 ? '#006400' : lime.indexOf(i) >= 0 ? '#00ff00' :
      (i >= 164 && i <= 166) ? '#ff00ff' : (i >= 167 && i <= 170) ? '#800080' : '#666666';
    s += y < 776 ? rect(bar(i) - 2, y, 5, 776 - y, col) : rect(bar(i) - 2, 777, 5, y - 777, col);
  });
  [63, 64, 65, 66, 121, 122, 123].forEach(function (i) { s += rect(bar(i) - 2, 778, 5, 47, RED); });
  for (var i = 33; i <= 123; i++) s += rect(bar(i) - 3, 774, 6, 4, BLUE);
  fit('yama').innerHTML = s;
  fit('yama-axis').innerHTML = axis('yama-axis', [['60', 736], ['0.00', 776], ['-60', 816.5]]);
})();

fit('sym1-axis').innerHTML = axis('sym1-axis', [['6', 835], ['0', 843]]);
fit('sym2-axis').innerHTML = axis('sym2-axis', [['6', 863], ['0', 868]]);
```
